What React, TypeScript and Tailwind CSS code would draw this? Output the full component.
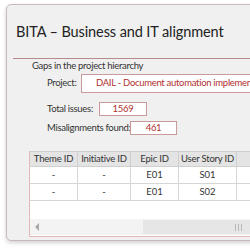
import React from "react"

const columns = ["Theme ID", "Initiative ID", "Epic ID", "User Story ID", ""]
const widths = ["w-[48px]", "w-[53px]", "w-[48px]", "w-[58px]", "w-[60px]"]

const rows = [
  ["-", "-", "E01", "S01", ""],
  ["-", "-", "E01", "S02", ""],
]

export default function App() {
  return (
    <div className="w-[250px] h-[250px] bg-white overflow-hidden pl-[6px] pt-[4px] font-['Lato',sans-serif]">
      <div className="w-[270px] h-[237px] rounded-[5px] border border-[#cbb8b8] bg-[#f0f0f0] shadow-[0_2px_4px_rgba(0,0,0,0.18)] flex flex-col">
        {/* heading */}
        <div className="ml-[6px] h-[54px] border-b border-[#b98a8a] flex items-center">
          <h1 className="pl-[3px] pt-[1px] text-[14.5px] tracking-[-0.1px] text-[#222] whitespace-nowrap">BITA – Business and IT alignment</h1>
        </div>

        <div className="pl-[25px] text-[9.5px] tracking-[-0.3px] text-[#333] whitespace-nowrap">
          <div className="leading-[11px] pt-[1px]">Gaps in the project hierarchy</div>

          <div className="pl-[15px] mt-[3px] flex flex-col">
            <div className="flex items-center h-[19px]">
              <span className="w-[34px]">Project:</span>
              <div className="flex-1 min-w-0 h-[19px] bg-white border border-[#c99a9a] pl-[14px] flex items-center text-[#b03030] overflow-hidden">
                DAIL - Document automation implementation
              </div>
            </div>

            <div className="flex items-center h-[14px] mt-[9px]">
              <span className="w-[52px]">Total issues:</span>
              <div className="w-[48px] h-[14px] bg-white border border-[#c99a9a] flex items-center justify-center text-[#b03030]">
                1569
              </div>
            </div>

            <div className="flex items-center h-[14px] mt-[5px]">
              <span className="w-[83px]">Misalignments found:</span>
              <div className="w-[47px] h-[14px] bg-white border border-[#c99a9a] flex items-center justify-center text-[#b03030]">
                461
              </div>
            </div>
          </div>
        </div>

        {/* grid */}
        <div className="ml-[22px] mt-[16px] h-[86px] border-l border-b border-[#e2b8b8] bg-white flex flex-col">
          <div className="flex h-[16px] bg-[#e4e4e4] border-y border-[#cfcfcf]">
            {columns.map((c, i) => (
              <div
                key={i}
                className={`${widths[i]} shrink-0 border-r border-[#cfcfcf] flex items-center justify-center text-[9.5px] tracking-[-0.2px] text-[#333] whitespace-nowrap`}
              >
                {c}
              </div>
            ))}
          </div>
          {rows.map((r, ri) => (
            <div key={ri} className="flex h-[17px] border-b border-[#d6d6d6]">
              {r.map((v, i) => (
                <div
                  key={i}
                  className={`${widths[i]} shrink-0 border-r border-[#d6d6d6] flex items-center justify-center text-[9.5px] text-[#333]`}
                >
                  {v}
                </div>
              ))}
            </div>
          ))}
          <div className="flex-1" />
          {/* horizontal scrollbar */}
          <div className="h-[16px] bg-[#f3f3f3] flex items-center mb-[1px]">
            <div className="w-[14px] flex justify-center">
              <svg width="6" height="8" viewBox="0 0 6 8">
                <polygon points="5,0 5,8 1,4" fill="#a8a8a8" />
              </svg>
            </div>
            <div className="ml-[99px] h-[14px] flex-1 bg-[#e6e6e6] flex items-center pl-[92px] gap-[2px]">
              <span className="w-px h-[7px] bg-[#b8b8b8]" />
              <span className="w-px h-[7px] bg-[#b8b8b8]" />
              <span className="w-px h-[7px] bg-[#b8b8b8]" />
            </div>
          </div>
        </div>
      </div>
    </div>
  )
}
